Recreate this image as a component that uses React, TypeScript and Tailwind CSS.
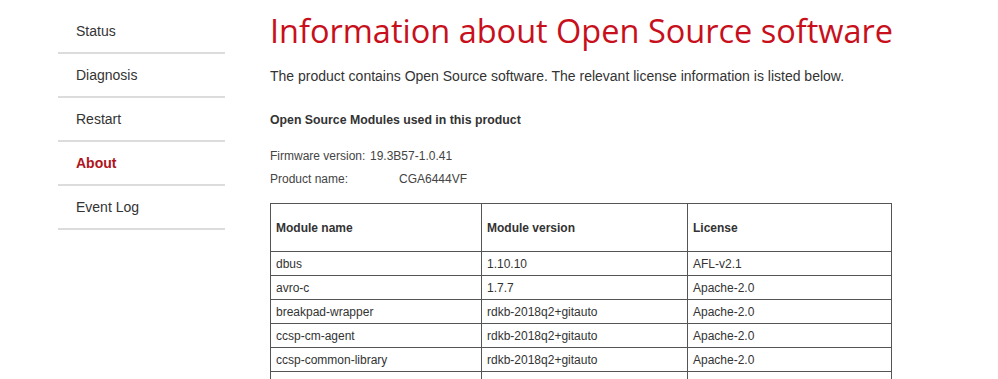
import React from "react";

const navItems = ["Status", "Diagnosis", "Restart", "About", "Event Log"];

const modules: [string, string, string][] = [
  ["dbus", "1.10.10", "AFL-v2.1"],
  ["avro-c", "1.7.7", "Apache-2.0"],
  ["breakpad-wrapper", "rdkb-2018q2+gitauto", "Apache-2.0"],
  ["ccsp-cm-agent", "rdkb-2018q2+gitauto", "Apache-2.0"],
  ["ccsp-common-library", "rdkb-2018q2+gitauto", "Apache-2.0"],
  ["ccsp-dmcli", "rdkb-2018q2+gitauto", "Apache-2.0"],
];

export default function App() {
  return (
    <div className="w-[998px] h-[379px] overflow-hidden bg-white font-['Liberation_Sans',Arial,sans-serif] text-[#333]">
      <div className="flex pl-[58px]">
        {/* sidebar */}
        <nav className="w-[167px] shrink-0 pt-[10px]">
          {navItems.map((item) => (
            <div
              key={item}
              className={`h-[44px] flex items-center pl-[18px] border-b-2 border-[#dcdcdc] text-[14px] ${
                item === "About" ? "font-bold text-[#b0141c]" : "text-[#333]"
              }`}
            >
              {item}
            </div>
          ))}
        </nav>

        {/* content */}
        <main className="ml-[45px] w-[622px]">
          <h1 className="font-['Open_Sans',sans-serif] text-[32.5px] leading-[40px] text-[#c8101c] mt-[11px] whitespace-nowrap">
            Information about Open Source software
          </h1>
          <p className="text-[14px] mt-[16px] leading-[18px]">
            The product contains Open Source software. The relevant license information is listed below.
          </p>
          <h2 className="text-[12.3px] font-bold mt-[27px] leading-[16px]">
            Open Source Modules used in this product
          </h2>
          <div className="mt-[17px] text-[12px] leading-[23px] text-[#444]">
            <div className="flex">
              <span className="w-[100px]">Firmware version:</span>
              <span>19.3B57-1.0.41</span>
            </div>
            <div className="flex">
              <span className="w-[129px]">Product name:</span>
              <span>CGA6444VF</span>
            </div>
          </div>
          <table className="mt-[12px] w-[622px] border-collapse text-[12px] text-[#333]">
            <thead>
              <tr className="h-[48px]">
                <th className="w-[211px] border border-[#555] text-left font-bold px-[5px]">Module name</th>
                <th className="w-[206px] border border-[#555] text-left font-bold px-[5px]">Module version</th>
                <th className="border border-[#555] text-left font-bold px-[5px]">License</th>
              </tr>
            </thead>
            <tbody>
              {modules.map(([name, version, license]) => (
                <tr key={name} className="h-[24px]">
                  <td className="border border-[#555] px-[5px]">{name}</td>
                  <td className="border border-[#555] px-[5px]">{version}</td>
                  <td className="border border-[#555] px-[5px]">{license}</td>
                </tr>
              ))}
            </tbody>
          </table>
        </main>
      </div>
    </div>
  );
}
